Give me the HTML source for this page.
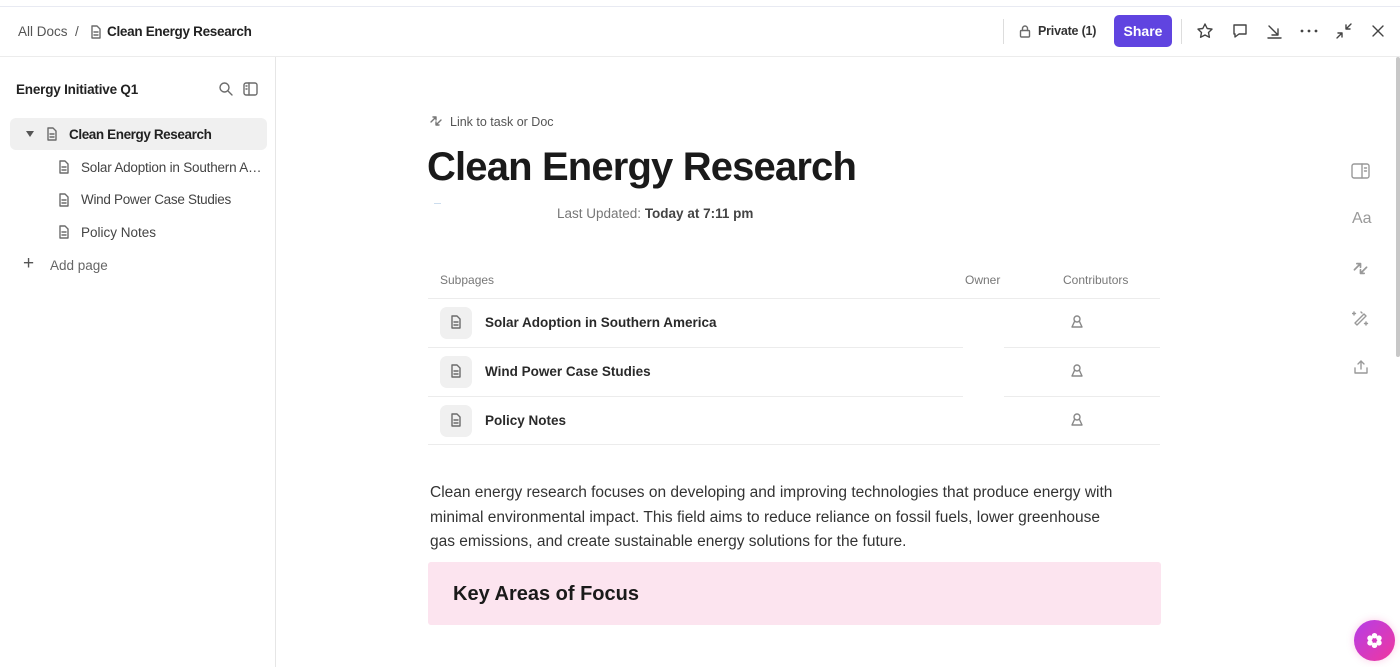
<!DOCTYPE html>
<html><head><meta charset="utf-8"><style>
*{box-sizing:border-box;margin:0;padding:0}
body{width:1400px;height:667px;overflow:hidden;background:#fff;font-family:"Liberation Sans",sans-serif;color:#202020;position:relative}
.top{position:absolute;left:0;top:6px;width:1400px;height:51px;border-bottom:1px solid #ececec;border-top:1px solid #e8eaf2}
.abs{position:absolute}
.side{position:absolute;left:0;top:57px;width:276px;height:610px;border-right:1px solid #e6e6e6;background:#fff}
svg{display:block}
.ic{stroke:#6b6b6b;fill:none;stroke-width:1.4;stroke-linecap:round;stroke-linejoin:round}
.rowtxt{font-size:13.5px;color:#444}
.tr{position:absolute;left:428px;width:732px;height:49px;border-top:1px solid #ececec}
.tr .box{position:absolute;left:12px;top:8px;width:32px;height:32px;border-radius:7px;background:#f0f0f0}
.tr .t{position:absolute;left:57px;top:16px;font-size:13.5px;font-weight:bold;color:#2a2a2a}
</style></head><body>
<div class="top"></div>
<div class="abs" style="left:18px;top:24px;font-size:13.5px;color:#555">All Docs &nbsp;/</div>
<svg class="abs ic" style="left:90px;top:25px" width="12" height="14" viewBox="0 0 12 14"><path d="M2 1h5l3 3v9H2z M4 7h4 M4 10h4"/></svg>
<div class="abs" style="left:107px;top:24px;font-size:13.5px;color:#222;font-weight:bold;letter-spacing:-0.3px">Clean Energy Research</div>
<div class="abs" style="left:1003px;top:19px;width:1px;height:25px;background:#ddd"></div>
<svg class="abs ic" style="left:1019px;top:25px" width="12" height="13" viewBox="0 0 12 13"><rect x="1.5" y="5.5" width="9" height="6.5" rx="1"/><path d="M3.5 5.5V3.5a2.5 2.5 0 0 1 5 0v2"/></svg>
<div class="abs" style="left:1038px;top:24px;font-size:12.5px;color:#333;font-weight:bold;letter-spacing:-0.2px">Private (1)</div>
<div class="abs" style="left:1114px;top:15px;width:58px;height:32px;border-radius:5px;background:#6044e0;color:#fff;font-weight:bold;font-size:14px;text-align:center;line-height:32px">Share</div>
<div class="abs" style="left:1181px;top:19px;width:1px;height:25px;background:#ddd"></div>
<svg class="abs ic" style="left:1196px;top:22px;stroke:#444" width="18" height="18" viewBox="0 0 18 18"><path d="M9 2l2.2 4.5 4.8.6-3.5 3.4.9 4.8L9 13l-4.4 2.3.9-4.8L2 7.1l4.8-.6z"/></svg>
<svg class="abs ic" style="left:1231px;top:22px;stroke:#444" width="18" height="18" viewBox="0 0 18 18"><path d="M3 3h12v9H8l-4 3v-3H3z"/></svg>
<svg class="abs ic" style="left:1265px;top:22px;stroke:#444" width="18" height="18" viewBox="0 0 18 18"><path d="M4 4l9 9 M13 7v6H7 M3 16h13"/></svg>
<svg class="abs" style="left:1300px;top:29px" width="18" height="4" viewBox="0 0 18 4"><g fill="#444"><circle cx="2" cy="2" r="1.4"/><circle cx="9" cy="2" r="1.4"/><circle cx="16" cy="2" r="1.4"/></g></svg>
<svg class="abs ic" style="left:1335px;top:22px;stroke:#444" width="18" height="18" viewBox="0 0 18 18"><path d="M16 2l-5 5 M11 3v4h4 M2 16l5-5 M3 11h4v4"/></svg>
<svg class="abs ic" style="left:1370px;top:23px;stroke:#444" width="16" height="16" viewBox="0 0 16 16"><path d="M3 3l10 10M13 3L3 13"/></svg>

<div class="side">
<div class="abs" style="left:16px;top:25px;font-size:13.5px;font-weight:bold;color:#222;letter-spacing:-0.2px">Energy Initiative Q1</div>
<svg class="abs ic" style="left:218px;top:24px" width="16" height="16" viewBox="0 0 16 16"><circle cx="6.5" cy="6.5" r="4.5"/><path d="M10 10l4 4"/></svg>
<svg class="abs ic" style="left:243px;top:25px" width="15" height="14" viewBox="0 0 15 14"><rect x="1" y="1" width="13" height="12" rx="2"/><path d="M6 1v12 M3 4h1 M3 7h1"/></svg>
<div class="abs" style="left:10px;top:61px;width:257px;height:32px;border-radius:6px;background:#f0f0f0"></div>
<div class="abs" style="left:26px;top:74px;width:0;height:0;border-left:4.5px solid transparent;border-right:4.5px solid transparent;border-top:6px solid #555"></div>
<svg class="abs ic" style="left:46px;top:70px" width="12" height="14" viewBox="0 0 12 14"><path d="M2 1h5l3 3v9H2z M4 7h4 M4 10h4"/></svg>
<div class="abs" style="left:69px;top:70px;font-size:13.5px;color:#222;font-weight:bold;letter-spacing:-0.4px">Clean Energy Research</div>
<svg class="abs ic" style="left:58px;top:103px" width="12" height="14" viewBox="0 0 12 14"><path d="M2 1h5l3 3v9H2z M4 7h4 M4 10h4"/></svg>
<div class="abs rowtxt" style="left:81px;top:103px;white-space:nowrap;width:183px;overflow:hidden;text-overflow:ellipsis;letter-spacing:-0.2px">Solar Adoption in Southern America</div>
<svg class="abs ic" style="left:58px;top:136px" width="12" height="14" viewBox="0 0 12 14"><path d="M2 1h5l3 3v9H2z M4 7h4 M4 10h4"/></svg>
<div class="abs rowtxt" style="left:81px;top:135px;letter-spacing:-0.3px">Wind Power Case Studies</div>
<svg class="abs ic" style="left:58px;top:168px" width="12" height="14" viewBox="0 0 12 14"><path d="M2 1h5l3 3v9H2z M4 7h4 M4 10h4"/></svg>
<div class="abs rowtxt" style="left:81px;top:168px">Policy Notes</div>
<div class="abs" style="left:23px;top:196px;font-size:19px;color:#555;font-weight:300">+</div>
<div class="abs" style="left:50px;top:201px;font-size:13.5px;color:#666">Add page</div>
</div>

<svg class="abs ic" style="left:429px;top:114px;stroke:#777" width="14" height="14" viewBox="0 0 14 14"><path d="M2 8l5-5 M4 3h3v3 M12 6l-5 5 M10 11H7V8"/></svg>
<div class="abs" style="left:450px;top:115px;font-size:12.5px;color:#555">Link to task or Doc</div>
<div class="abs" style="left:427px;top:145px;font-size:40px;font-weight:bold;color:#1a1a1a;letter-spacing:-0.85px">Clean Energy Research</div>
<div class="abs" style="left:434px;top:203px;width:7px;height:1px;background:#cde"></div>
<div class="abs" style="left:557px;top:206px;font-size:13.5px;color:#777">Last Updated: <span style="color:#444;font-weight:bold">Today at 7:11 pm</span></div>

<div class="abs" style="left:440px;top:273px;font-size:12px;color:#777">Subpages</div>
<div class="abs" style="left:965px;top:273px;font-size:12px;color:#777">Owner</div>
<div class="abs" style="left:1063px;top:273px;font-size:12px;color:#777">Contributors</div>
<div class="tr" style="top:298px"><div class="box"></div><div class="t">Solar Adoption in Southern America</div></div>
<div class="tr" style="top:347px"><div class="box"></div><div class="t">Wind Power Case Studies</div></div>
<div class="tr" style="top:396px;border-bottom:1px solid #ececec"><div class="box"></div><div class="t">Policy Notes</div></div>
<div class="abs" style="left:963px;top:340px;width:41px;height:64px;background:#fff"></div>
<svg class="abs ic" style="left:450px;top:315px" width="12" height="14" viewBox="0 0 12 14"><path d="M2 1h5l3 3v9H2z M4 7h4 M4 10h4"/></svg>
<svg class="abs ic" style="left:450px;top:364px" width="12" height="14" viewBox="0 0 12 14"><path d="M2 1h5l3 3v9H2z M4 7h4 M4 10h4"/></svg>
<svg class="abs ic" style="left:450px;top:413px" width="12" height="14" viewBox="0 0 12 14"><path d="M2 1h5l3 3v9H2z M4 7h4 M4 10h4"/></svg>
<svg class="abs ic" style="left:1070px;top:314px;stroke:#888" width="14" height="15" viewBox="0 0 14 15"><circle cx="7" cy="5" r="3"/><path d="M4.5 7.5 2 13h10L9.5 7.5"/></svg>
<svg class="abs ic" style="left:1070px;top:363px;stroke:#888" width="14" height="15" viewBox="0 0 14 15"><circle cx="7" cy="5" r="3"/><path d="M4.5 7.5 2 13h10L9.5 7.5"/></svg>
<svg class="abs ic" style="left:1070px;top:412px;stroke:#888" width="14" height="15" viewBox="0 0 14 15"><circle cx="7" cy="5" r="3"/><path d="M4.5 7.5 2 13h10L9.5 7.5"/></svg>

<div class="abs" style="left:430px;top:481px;width:690px;font-size:15.5px;line-height:24.5px;color:#333">Clean energy research focuses on developing and improving technologies that produce energy with minimal environmental impact. This field aims to reduce reliance on fossil fuels, lower greenhouse gas emissions, and create sustainable energy solutions for the future.</div>
<div class="abs" style="left:428px;top:562px;width:733px;height:63px;border-radius:3px;background:#fce4ef"></div>
<div class="abs" style="left:453px;top:583px;font-size:20px;font-weight:bold;color:#1a1a1a">Key Areas of Focus</div>

<svg class="abs ic" style="left:1351px;top:163px;stroke:#999" width="19" height="16" viewBox="0 0 19 16"><rect x="1" y="1" width="17" height="14" rx="2"/><path d="M11 1v14 M13.5 5h2 M13.5 8h2"/></svg>
<div class="abs" style="left:1352px;top:210px;font-size:16px;color:#999">Aa</div>
<svg class="abs ic" style="left:1352px;top:260px;stroke:#999" width="17" height="17" viewBox="0 0 14 14"><path d="M2 8l5-5 M4 3h3v3 M12 6l-5 5 M10 11H7V8"/></svg>
<svg class="abs ic" style="left:1352px;top:310px;stroke:#999" width="17" height="17" viewBox="0 0 17 17"><path d="M5 15L14 6l-2-2-9 9z M2 2v3M.5 3.5h3 M14 12v3M12.5 13.5h3 M9 2l1 1"/></svg>
<svg class="abs ic" style="left:1353px;top:359px;stroke:#999" width="16" height="16" viewBox="0 0 16 16"><path d="M8 10V2 M5 5l3-3 3 3 M2 9v5h12V9"/></svg>
<div class="abs" style="left:1396px;top:57px;width:4px;height:300px;background:#c8c8c8;border-radius:2px"></div>

<div class="abs" style="left:1354px;top:620px;width:41px;height:41px;border-radius:50%;background:linear-gradient(135deg,#b53ee8,#f0379e);box-shadow:0 0 8px rgba(240,60,160,.25)"></div>
<svg class="abs" style="left:1366px;top:632px" width="17" height="17" viewBox="0 0 16 16"><g fill="#fff"><circle cx="8" cy="3.5" r="2.6"/><circle cx="8" cy="12.5" r="2.6"/><circle cx="3.8" cy="5.8" r="2.6"/><circle cx="12.2" cy="5.8" r="2.6"/><circle cx="3.8" cy="10.2" r="2.6"/><circle cx="12.2" cy="10.2" r="2.6"/></g><circle cx="8" cy="8" r="2" fill="#d43bc0"/></svg>
</body></html>
